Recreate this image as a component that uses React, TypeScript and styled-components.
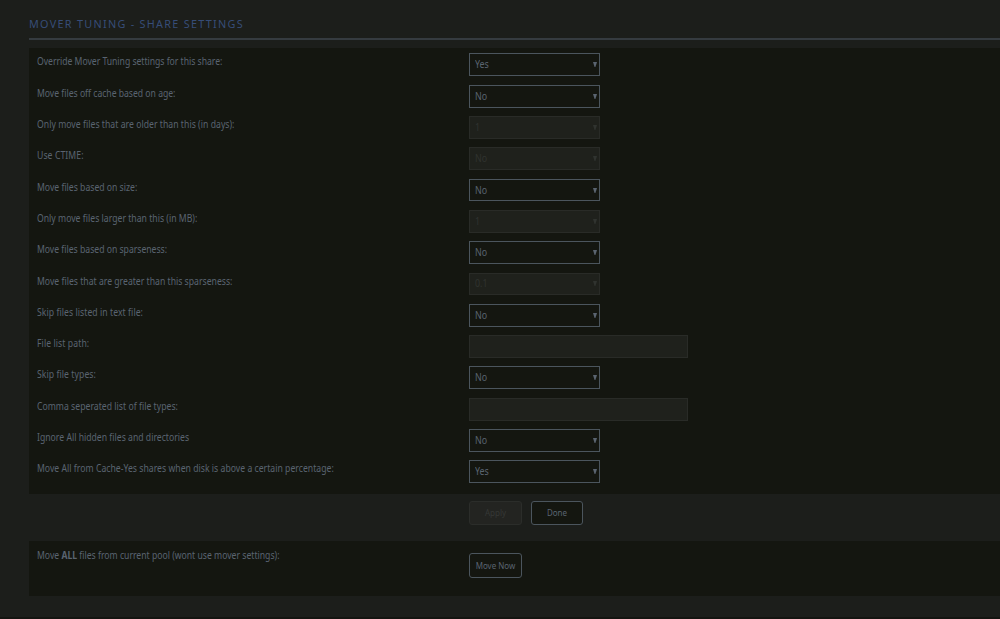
import React from "react";
import styled, { createGlobalStyle, css } from "styled-components";

const GlobalStyle = createGlobalStyle`
  *, *::before, *::after { box-sizing: border-box; }
  html, body { margin: 0; background: #1c1e1b; }
  body { font-family: "Noto Sans", "Open Sans", sans-serif; font-size: 10.3px; color: #5a6470; overflow: hidden; }
`;

const Page = styled.main`
  height: 619px;
  padding: 10px 0 0 29px;
  border-bottom: 2px solid #141511;
  background: #1c1e1b;
`;

const Title = styled.h1`
  margin: 0 0 8px;
  height: 30px;
  border-bottom: 2px solid #353b40;
  color: #374d78;
  font-size: 10.8px;
  font-weight: 400;
  line-height: 28px;
  letter-spacing: 1.3px;
  text-transform: uppercase;
  white-space: nowrap;
`;

const Panel = styled.section<{ $height: number; $top: number }>`
  height: ${(p) => p.$height}px;
  padding: ${(p) => p.$top}px 0 0 8px;
  background: #141610;
`;

const Row = styled.div`
  display: grid;
  grid-template-columns: 432px 1fr;
  align-items: start;
  height: 31.3px;
`;

const Label = styled.label<{ $spacing?: number }>`
  height: 17px;
  line-height: 17px;
  letter-spacing: ${(p) => p.$spacing ?? 0}px;
  white-space: nowrap;
  transform: scaleX(0.839);
  transform-origin: left center;
`;

const field = css<{ $disabled?: boolean }>`
  height: 22.8px;
  border: 1px solid ${(p) => (p.$disabled ? "#292b27" : "#4b555d")};
  background: ${(p) => (p.$disabled ? "#1f211c" : "#141610")};
  color: ${(p) => (p.$disabled ? "#30332f" : "#5a6470")};
`;

const Select = styled.div<{ $disabled?: boolean }>`
  ${field}
  display: flex;
  align-items: center;
  justify-content: space-between;
  width: 131.4px;
  padding: 0 2.8px 0 4.8px;
  line-height: 21px;
`;

const Value = styled.span`
  transform: scaleX(0.86);
  transform-origin: left center;
`;

const TextField = styled.input<{ $disabled?: boolean }>`
  ${field}
  width: 218.6px;
`;

const Arrow = styled.svg`
  width: 4px;
  height: 5px;
  fill: currentColor;
`;

const Actions = styled.div`
  display: flex;
  gap: 9px;
  height: 47.4px;
  padding: 7px 0 0 440px;
`;

const Button = styled.button<{ $disabled?: boolean; $width: number }>`
  width: ${(p) => p.$width}px;
  height: 24.5px;
  padding: 0;
  border: 1px solid ${(p) => (p.$disabled ? "#2b2d2a" : "#4b555d")};
  border-radius: 3px;
  background: ${(p) => (p.$disabled ? "#232421" : "#141610")};
  color: ${(p) => (p.$disabled ? "#363836" : "#5a6470")};
  font: 8px/22px "Noto Sans", "Open Sans", sans-serif;
  white-space: nowrap;
`;

const ActionCell = styled.div`
  padding-top: 6.4px;
`;

type Setting = { label: string; value?: string; disabled?: boolean; spacing?: number };

const settings: Setting[] = [
  { label: "Override Mover Tuning settings for this share:", value: "Yes", spacing: -0.03 },
  { label: "Move files off cache based on age:", value: "No", spacing: -0.02 },
  { label: "Only move files that are older than this (in days):", value: "1", disabled: true, spacing: 0.04 },
  { label: "Use CTIME:", value: "No", disabled: true, spacing: 0.1 },
  { label: "Move files based on size:", value: "No" },
  { label: "Only move files larger than this (in MB):", value: "1", disabled: true, spacing: 0.02 },
  { label: "Move files based on sparseness:", value: "No", spacing: -0.01 },
  { label: "Move files that are greater than this sparseness:", value: "0.1", disabled: true, spacing: 0.01 },
  { label: "Skip files listed in text file:", value: "No", spacing: 0.07 },
  { label: "File list path:", disabled: true, spacing: 0.1 },
  { label: "Skip file types:", value: "No", spacing: 0.08 },
  { label: "Comma seperated list of file types:", disabled: true, spacing: 0.03 },
  { label: "Ignore All hidden files and directories", value: "No", spacing: 0.01 },
  { label: "Move All from Cache-Yes shares when disk is above a certain percentage:", value: "Yes", spacing: 0.03 },
];

export default function App() {
  return (
    <>
      <GlobalStyle />
      <Page>
        <Title>Mover Tuning - Share Settings</Title>
        <Panel $height={445.6} $top={5.45}>
          {settings.map((s) => (
            <Row key={s.label}>
              <Label $spacing={s.spacing}>{s.label}</Label>
              {s.value ? (
                <Select $disabled={s.disabled}>
                  <Value>{s.value}</Value>
                  <Arrow viewBox="0 0 4 5"><path d="M0 0h4L2.4 5h-.8z" /></Arrow>
                </Select>
              ) : (
                <TextField $disabled={s.disabled} disabled />
              )}
            </Row>
          ))}
        </Panel>
        <Actions>
          <Button $width={53} $disabled disabled>Apply</Button>
          <Button $width={52}>Done</Button>
        </Actions>
        <Panel $height={55} $top={6}>
          <Row>
            <Label>Move <b>ALL</b> files from current pool (wont use mover settings):</Label>
            <ActionCell><Button $width={53}>Move Now</Button></ActionCell>
          </Row>
        </Panel>
      </Page>
    </>
  );
}
